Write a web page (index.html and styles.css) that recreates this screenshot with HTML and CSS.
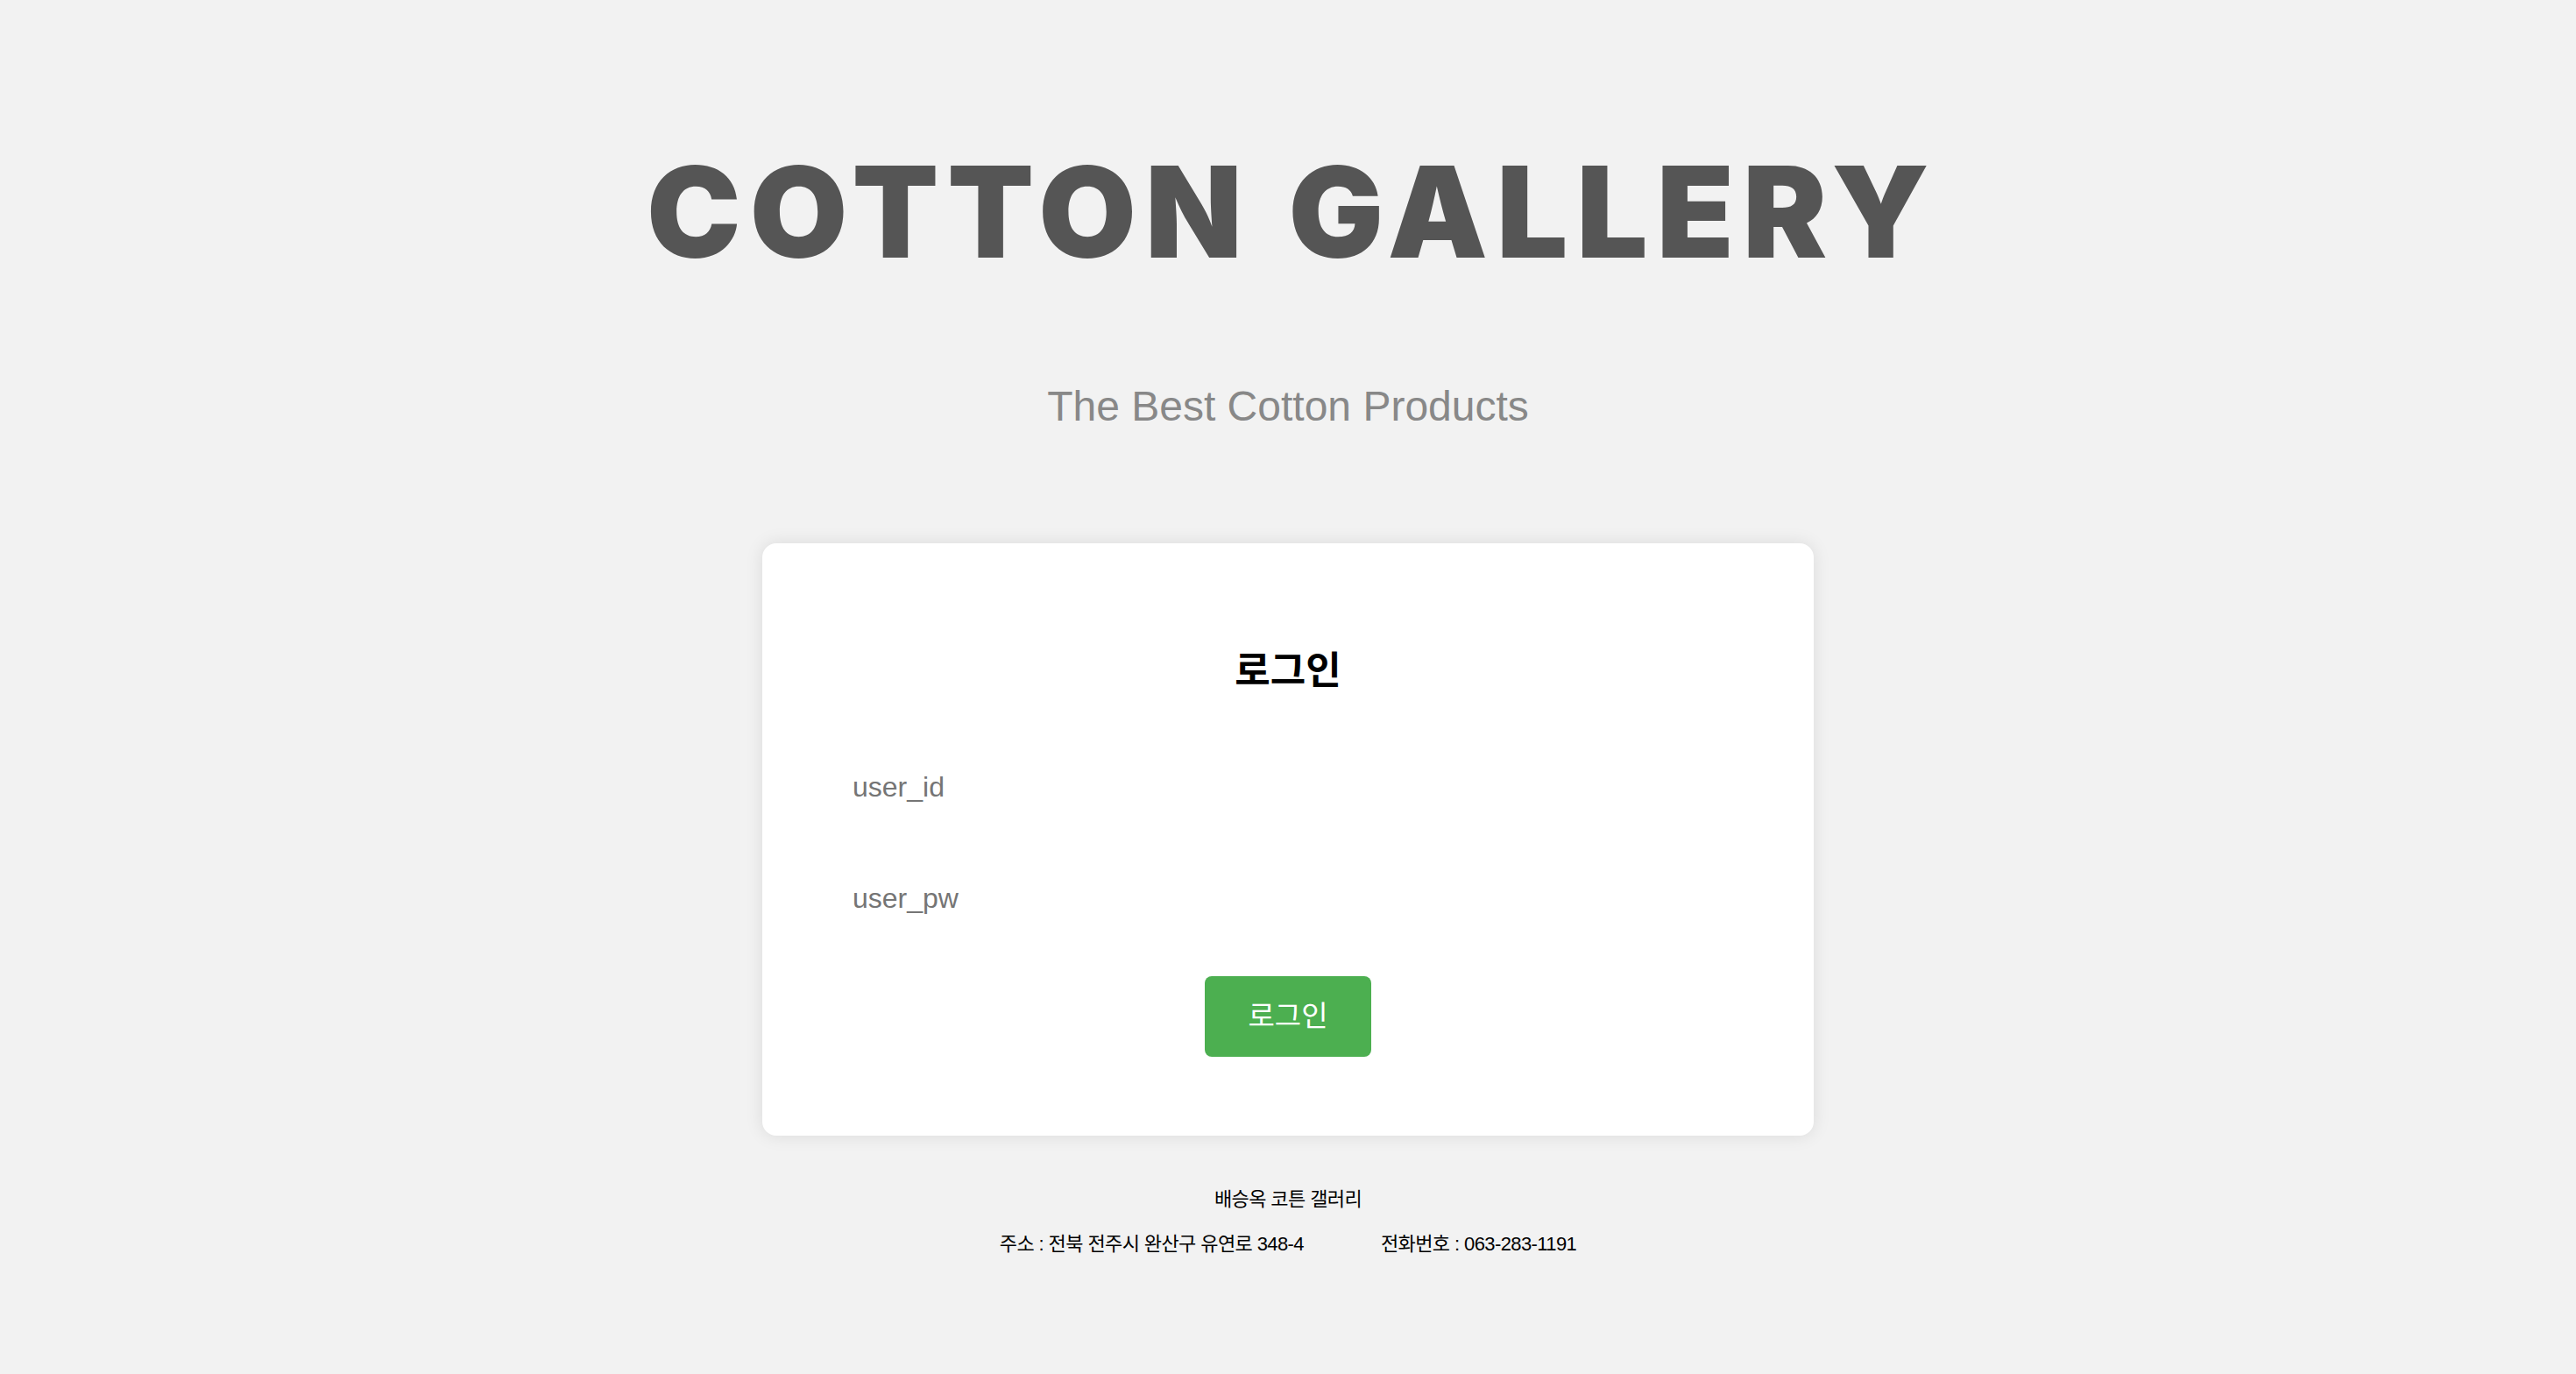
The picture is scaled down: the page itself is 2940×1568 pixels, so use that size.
FILE: index.html
```html
<!DOCTYPE html>
<html lang="ko">
<head>
<meta charset="utf-8">
<title>COTTON GALLERY</title>
<link rel="stylesheet" href="styles.css">
</head>
<body>
<main class="page">
  <header class="masthead">
    <h1 class="brand">COTTON GALLERY</h1>
    <p class="tagline">The Best Cotton Products</p>
  </header>
  <section class="login-card">
    <h2 class="login-title">로그인</h2>
    <form class="login-form">
      <input class="field" type="text" name="user_id" placeholder="user_id">
      <input class="field" type="password" name="user_pw" placeholder="user_pw">
      <button class="login-btn" type="submit">로그인</button>
    </form>
  </section>
  <footer class="site-footer">
    <p class="footer-name">배승옥 코튼 갤러리</p>
    <p class="footer-info"><span>주소 : 전북 전주시 완산구 유연로 348-4</span><span>전화번호 : 063-283-1191</span></p>
  </footer>
</main>
</body>
</html>
```
FILE: styles.css
```css
body {
  margin: 0;
  background: #f2f2f2;
  font-family: "Liberation Sans", "Noto Sans CJK KR", sans-serif;
}

.page {
  display: flex;
  flex-direction: column;
  align-items: center;
  padding-top: 170px;
}

.masthead {
  display: flex;
  flex-direction: column;
  align-items: center;
}

.brand {
  margin: 0 -10px 0 0;
  font-family: "Inter", "Liberation Sans", sans-serif;
  font-weight: 900;
  font-size: 144px;
  line-height: 144px;
  letter-spacing: 10px;
  word-spacing: 4px;
  color: #555555;
}

.tagline {
  margin: 126px 0 0;
  font-size: 48px;
  line-height: 48px;
  color: #888888;
}

.login-card {
  margin-top: 132px;
  width: 1200px;
  box-sizing: border-box;
  background: #ffffff;
  border-radius: 16px;
  box-shadow: 0 0 20px rgba(0, 0, 0, 0.1);
  padding: 118px 80px 90px;
  display: flex;
  flex-direction: column;
  align-items: center;
}

.login-title {
  margin: 0;
  font-family: "Noto Sans CJK KR", sans-serif;
  font-size: 44px;
  line-height: 48px;
  font-weight: 700;
  color: #000000;
}

.login-form {
  display: flex;
  flex-direction: column;
  align-items: center;
  width: 100%;
  margin-top: 72px;
}

.field {
  width: 100%;
  box-sizing: border-box;
  height: 80px;
  padding: 0 23px;
  border: 0;
  outline: 0;
  background: transparent;
  font-family: "Liberation Sans", sans-serif;
  font-size: 32px;
  line-height: 32px;
  color: #333333;
}

.field::placeholder {
  color: #757575;
}

.field + .field {
  margin-top: 47px;
}

.login-btn {
  margin-top: 49px;
  width: 190px;
  height: 92px;
  padding: 0 0 6px;
  border: 0;
  border-radius: 8px;
  background: #4caf50;
  color: #ffffff;
  font-family: "Noto Sans CJK KR", sans-serif;
  font-size: 33px;
  line-height: 1;
}

.site-footer {
  margin-top: 53px;
  text-align: center;
  font-size: 22px;
  line-height: 40px;
  letter-spacing: -0.6px;
  color: #000000;
}

.site-footer .footer-name {
  margin: 0;
}

.site-footer .footer-info {
  display: flex;
  justify-content: center;
  gap: 88px;
  margin: 11px 0 0;
}
```
